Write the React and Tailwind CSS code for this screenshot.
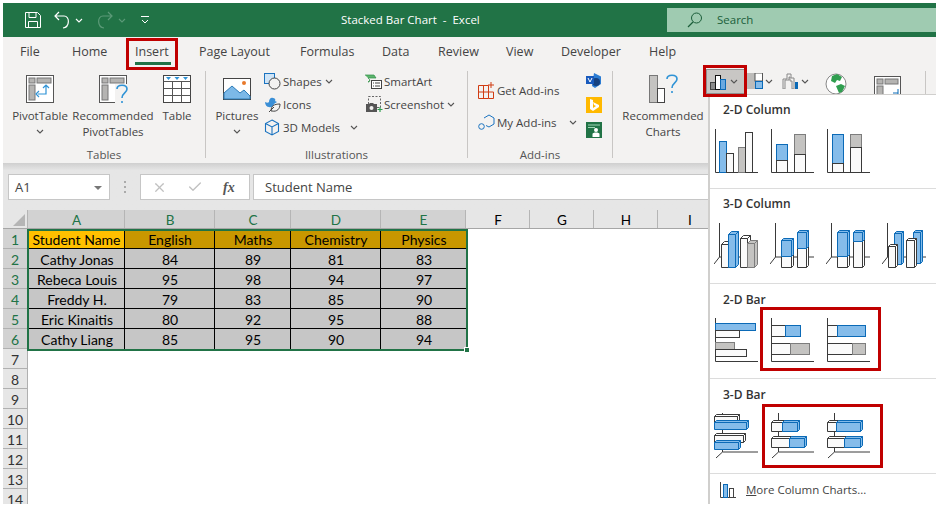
import { X, Check } from 'lucide-react';

const W = { fill: '#fafafa', stroke: '#3a3a3a' };
const B = { fill: '#85bcea', stroke: '#0b6ab7' };
const G = { fill: '#c4c3c1', stroke: '#7d7d7d' };

const rows = [
  ['Cathy Jonas', 84, 89, 81, 83],
  ['Rebeca Louis', 95, 98, 94, 97],
  ['Freddy H.', 79, 83, 85, 90],
  ['Eric Kinaitis', 80, 92, 95, 88],
  ['Cathy Liang', 85, 95, 90, 94],
];

function Chevron({ className = '', color = '#555' }) {
  return (
    <svg width="8" height="5" viewBox="0 0 8 5" className={className}>
      <path d="M1 1l3 3 3-3" fill="none" stroke={color} strokeWidth="1.1" />
    </svg>
  );
}

function Bar({ x, y, w, h, c }) {
  return <rect x={x + 0.5} y={y + 0.5} width={w} height={h} fill={c.fill} stroke={c.stroke} />;
}

// front face plus top and right side, for the 3-D thumbnails
function Box({ x, y, w, h, c, d = 3 }) {
  const side = c === W ? '#fff' : c.fill;
  return (
    <g stroke={c.stroke} fill={c.fill} strokeLinejoin="round">
      <path d={`M${x} ${y}l${d} ${-d}h${w}l${-d} ${d}z`} fill={side} />
      <path d={`M${x + w} ${y}l${d} ${-d}v${h}l${-d} ${d}z`} fill={side} />
      <rect x={x} y={y} width={w} height={h} />
    </g>
  );
}

function Thumb({ children }) {
  return (
    <svg width="46" height="46" viewBox="0 0 46 46" className="block shrink-0">
      {children}
    </svg>
  );
}

const Axis2D = () => <path d="M1.5 0v43.5H44" fill="none" stroke="#3a3a3a" />;
const Axis3DCol = () => <path d="M5.5 0v34M0 41l5.5-7H44" fill="none" stroke="#3a3a3a" />;
const Axis3DBar = () => <path d="M8.5 0v39M2 45l6.5-6H44" fill="none" stroke="#3a3a3a" />;

function ColumnThumbs() {
  return (
    <>
      <Thumb>
        <Axis2D />
        <Bar x={5} y={12} w={7} h={31} c={B} />
        <Bar x={12} y={24} w={7} h={19} c={W} />
        <Bar x={24} y={18} w={7} h={25} c={G} />
        <Bar x={31} y={3} w={7} h={40} c={W} />
      </Thumb>
      <Thumb>
        <Axis2D />
        <Bar x={6} y={15} w={11} h={16} c={B} />
        <Bar x={6} y={31} w={11} h={12} c={W} />
        <Bar x={24} y={5} w={11} h={20} c={G} />
        <Bar x={24} y={25} w={11} h={18} c={W} />
      </Thumb>
      <Thumb>
        <Axis2D />
        <Bar x={6} y={5} w={11} h={29} c={B} />
        <Bar x={6} y={34} w={11} h={9} c={W} />
        <Bar x={24} y={5} w={11} h={13} c={G} />
        <Bar x={24} y={18} w={11} h={25} c={W} />
      </Thumb>
    </>
  );
}

function Column3DThumbs() {
  return (
    <>
      <Thumb>
        <Axis3DCol />
        <Box x={7.5} y={21.5} w={7} h={23} c={W} />
        <Box x={14.5} y={11.5} w={7} h={33} c={B} />
        <Box x={26.5} y={15.5} w={7} h={29} c={W} />
        <Box x={33.5} y={20.5} w={7} h={24} c={G} />
      </Thumb>
      <Thumb>
        <Axis3DCol />
        <Box x={11.5} y={33.5} w={10} h={11} c={W} d={2} />
        <Box x={11.5} y={17.5} w={10} h={16} c={B} d={2} />
        <Box x={27.5} y={25.5} w={9} h={19} c={W} d={2} />
        <Box x={27.5} y={9.5} w={9} h={16} c={B} d={2} />
      </Thumb>
      <Thumb>
        <Axis3DCol />
        <Box x={11.5} y={33.5} w={10} h={11} c={W} d={2} />
        <Box x={11.5} y={9.5} w={10} h={24} c={B} d={2} />
        <Box x={27.5} y={18.5} w={9} h={26} c={W} d={2} />
        <Box x={27.5} y={9.5} w={9} h={9} c={B} d={2} />
      </Thumb>
      <Thumb>
        <Axis3DCol />
        <Box x={12.5} y={10.5} w={7} h={31} c={B} d={2} />
        <Box x={6.5} y={23.5} w={7} h={21} c={W} d={2} />
        <Box x={31.5} y={9.5} w={7} h={31} c={B} d={2} />
        <Box x={24.5} y={17.5} w={8} h={27} c={W} d={2} />
      </Thumb>
    </>
  );
}

function BarThumbs() {
  return (
    <>
      <Thumb>
        <Axis2D />
        <Bar x={1} y={5} w={40} h={7} c={B} />
        <Bar x={1} y={12} w={24} h={7} c={W} />
        <Bar x={1} y={24} w={19} h={7} c={G} />
        <Bar x={1} y={31} w={31} h={7} c={W} />
      </Thumb>
      <Thumb>
        <Axis2D />
        <Bar x={1} y={7} w={14} h={11} c={W} />
        <Bar x={15} y={7} w={15} h={11} c={B} />
        <Bar x={1} y={25} w={19} h={11} c={W} />
        <Bar x={20} y={25} w={19} h={11} c={G} />
      </Thumb>
      <Thumb>
        <Axis2D />
        <Bar x={1} y={7} w={10} h={11} c={W} />
        <Bar x={11} y={7} w={28} h={11} c={B} />
        <Bar x={1} y={25} w={25} h={11} c={W} />
        <Bar x={26} y={25} w={13} h={11} c={G} />
      </Thumb>
    </>
  );
}

function Bar3DThumbs() {
  return (
    <>
      <Thumb>
        <Axis3DBar />
        <Box x={0.5} y={3.5} w={23} h={6} c={W} d={2} />
        <Box x={0.5} y={9.5} w={32} h={7} c={B} d={2} />
        <Box x={0.5} y={22.5} w={29} h={7} c={W} d={2} />
        <Box x={0.5} y={29.5} w={24} h={7} c={B} d={2} />
      </Thumb>
      <Thumb>
        <Axis3DBar />
        <Box x={1.5} y={9.5} w={11} h={9} c={W} d={2} />
        <Box x={12.5} y={9.5} w={15} h={9} c={B} d={2} />
        <Box x={1.5} y={25.5} w={18} h={9} c={W} d={2} />
        <Box x={19.5} y={25.5} w={15} h={9} c={B} d={2} />
      </Thumb>
      <Thumb>
        <Axis3DBar />
        <Box x={1.5} y={9.5} w={9} h={9} c={W} d={2} />
        <Box x={10.5} y={9.5} w={24} h={9} c={B} d={2} />
        <Box x={1.5} y={25.5} w={17} h={9} c={W} d={2} />
        <Box x={18.5} y={25.5} w={16} h={9} c={B} d={2} />
      </Thumb>
    </>
  );
}

function PivotIcon({ children }) {
  return (
    <svg width="30" height="30" viewBox="0 0 30 30" className="block">
      <rect x="1.5" y="1.5" width="27" height="27" fill="#fff" stroke="#555" />
      <rect x="4" y="4" width="6" height="5" fill="#b5b4b2" stroke="#777" />
      <rect x="12" y="4" width="14" height="5" fill="#b5b4b2" stroke="#777" />
      <rect x="4" y="11" width="6" height="15" fill="#b5b4b2" stroke="#777" />
      {children}
    </svg>
  );
}

const Question = ({ x, y }) => (
  <path
    transform={`translate(${x} ${y})`}
    d="M1 4c0-5 10-5 10 0 0 4-5 4-5 9M6 16v2"
    fill="none"
    stroke="#2f93d6"
    strokeWidth="1.6"
  />
);

function LargeButton({ label, className = '', chevron, icon }) {
  return (
    <div className={`flex flex-col items-center pt-[4px] ${className}`}>
      <div className="flex h-[30px] items-center justify-center">{icon}</div>
      <div className="mt-[4px] text-center leading-[15.5px] whitespace-pre-line">{label}</div>
      {chevron && <Chevron className="mt-[5px]" />}
    </div>
  );
}

function SmallItem({ icon, label, chevron }) {
  return (
    <div className="flex h-[23px] items-center">
      <div className="flex w-[19px] shrink-0 items-center">{icon}</div>
      <span>{label}</span>
      {chevron && <Chevron className={chevron} />}
    </div>
  );
}

function GroupLabel({ children }) {
  return <div className="h-[16px] pt-[1px] text-center text-[11.5px] leading-[14px] text-[#555]">{children}</div>;
}

const Separator = () => <div className="mt-[1px] h-[87px] w-px shrink-0 bg-[#c8c6c4]" />;

function Ribbon() {
  return (
    <div className="flex h-[93px] bg-[#f3f2f1] text-[11.5px] text-[#444]">
      <div className="flex w-[202px] shrink-0 flex-col">
        <div className="flex h-[77px] pl-[9px]">
          <LargeButton
            label="PivotTable"
            chevron
            className="w-[56px]"
            icon={
              <PivotIcon>
                <path d="M21 12v8h-8M14 17l-3 3 3 3M18 14l3-3 3 3" fill="none" stroke="#2f93d6" strokeWidth="1.2" />
              </PivotIcon>
            }
          />
          <LargeButton
            label={'Recommended\nPivotTables'}
            className="ml-[3px] w-[84px]"
            icon={
              <PivotIcon>
                <rect x="17" y="10" width="13" height="20" fill="#f3f2f1" />
                <Question x={18} y={11} />
              </PivotIcon>
            }
          />
          <LargeButton
            label="Table"
            className="ml-[5px] w-[34px]"
            icon={
              <svg width="30" height="30" viewBox="0 0 30 30">
                <rect x="1.5" y="1.5" width="27" height="27" fill="#fff" stroke="#444" />
                <path d="M1.5 7.5h27M1.5 14.5h27M1.5 21.5h27M10.5 7.5v21M19.5 7.5v21" stroke="#555" fill="none" />
                <path d="M4 3h5l-2.5 3zM12.5 3h5L15 6zM21 3h5l-2.5 3z" fill="#2f93d6" />
              </svg>
            }
          />
        </div>
        <GroupLabel>Tables</GroupLabel>
      </div>
      <Separator />
      <div className="flex w-[261px] shrink-0 flex-col">
        <div className="flex h-[77px]">
          <LargeButton
            label="Pictures"
            chevron
            className="ml-[10px] w-[42px]"
            icon={
              <svg width="30" height="24" viewBox="0 0 30 24">
                <rect x="1.5" y="1.5" width="27" height="21" fill="#fff" stroke="#444" />
                <path d="M2 22V16l8-7 8 7 4-3 6 6v3z" fill="#7cb9e8" stroke="#2d7cb8" />
                <circle cx="22" cy="6" r="2" fill="#e8792b" />
              </svg>
            }
          />
          <div className="ml-[6px] w-[101px] shrink-0">
            <SmallItem
              label="Shapes"
              chevron="ml-[3px]"
              icon={
                <svg width="17" height="17" viewBox="0 0 17 17">
                  <rect x="0.5" y="0.5" width="10" height="10" fill="#cfe4f6" stroke="#1a73c0" />
                  <circle cx="10.5" cy="10.5" r="5.5" fill="#f3f2f1" stroke="#444" />
                </svg>
              }
            />
            <SmallItem
              label="Icons"
              icon={
                <svg width="17" height="17" viewBox="0 0 17 17">
                  <path d="M1 6c2 1 3 1 4 0 0-3 2-5 4-4 2 0 3 2 2 3l2 1-3 2c0 2-3 4-5 3-2 0-4-2-4-5z" fill="#3a8fd6" />
                  <path d="M7 15c0-5 3-7 9-7 0 5-3 8-8 7zM5 16l5-5" fill="#f3f2f1" stroke="#444" />
                </svg>
              }
            />
            <SmallItem
              label="3D Models"
              chevron="ml-[10px]"
              icon={
                <svg width="16" height="17" viewBox="0 0 16 17">
                  <path d="M8 1l6.5 3.5v8L8 16l-6.5-3.5v-8zM1.5 4.5L8 8l6.5-3.5M8 8v8" fill="none" stroke="#1a73c0" strokeWidth="1.1" />
                </svg>
              }
            />
          </div>
          <div className="w-[90px] shrink-0">
            <SmallItem
              label="SmartArt"
              icon={
                <svg width="17" height="15" viewBox="0 0 17 15">
                  <path d="M0 1h9l2 3H3l2 2-2 2 1 0 1-2" fill="#5cb46d" stroke="#2f8f46" strokeWidth="0.7" />
                  <rect x="6.5" y="6.5" width="10" height="8" fill="#fff" stroke="#444" />
                  <path d="M8 9h1M10 9h5M8 12h1M10 12h5" stroke="#444" />
                </svg>
              }
            />
            <SmallItem
              label="Screenshot"
              chevron="ml-[3px]"
              icon={
                <svg width="18" height="17" viewBox="0 0 18 17">
                  <rect x="3.5" y="0.5" width="12" height="11" fill="none" stroke="#666" strokeDasharray="2 1.5" />
                  <path d="M1 8h3l1-1h3l1 1h3v8H1z" fill="#555" />
                  <circle cx="6.5" cy="12" r="2" fill="#f3f2f1" />
                  <path d="M15 11v5M12.5 13.5h5" stroke="#2f9e4f" strokeWidth="1.2" />
                </svg>
              }
            />
          </div>
        </div>
        <GroupLabel>Illustrations</GroupLabel>
      </div>
      <Separator />
      <div className="flex w-[144px] shrink-0 flex-col">
        <div className="flex h-[77px] pl-[10px]">
          <div className="w-[108px] shrink-0 pt-[9px]">
            <SmallItem
              label="Get Add-ins"
              icon={
                <svg width="17" height="17" viewBox="0 0 17 17">
                  <path d="M.5 3.5h10v13H.5zM.5 10h15v6.5h-5M5.5 3.5v13M13 0v6M10 3h6" fill="none" stroke="#d13c12" />
                </svg>
              }
            />
            <div className="mt-[9px]">
              <SmallItem
                label="My Add-ins"
                chevron="ml-[12px]"
                icon={
                  <svg width="17" height="17" viewBox="0 0 17 17">
                    <path d="M6 4l5-3 5 3v6l-5 3-3-1.5" fill="none" stroke="#1a73c0" />
                    <circle cx="3.5" cy="12.5" r="2.8" fill="none" stroke="#1a73c0" />
                  </svg>
                }
              />
            </div>
          </div>
          <div className="flex flex-col gap-[9px] pt-[3px]">
            <svg width="16" height="15" viewBox="0 0 16 15">
              <path d="M8 0l7 3.5V11l-6 4-3-2H6z" fill="#2b7cd3" />
              <circle cx="10" cy="9" r="4" fill="#16417f" />
              <rect x="0" y="3" width="8" height="8" fill="#185abd" />
              <path d="M2 5l2 4 2-4" fill="none" stroke="#fff" />
            </svg>
            <svg width="16" height="16" viewBox="0 0 16 16">
              <rect width="16" height="16" fill="#ffb900" />
              <path d="M4 2l3 1v8l3-2-2-1-1-3 6 3v2l-6 4-3-2z" fill="#fff" />
            </svg>
            <svg width="16" height="16" viewBox="0 0 16 16">
              <rect width="16" height="16" fill="#217346" />
              <path d="M2 3h12M2 5.5h7" stroke="#9fd5b4" />
              <circle cx="10" cy="8" r="2" fill="#fff" />
              <path d="M6.5 15v-3c0-2 7-2 7 0v3z" fill="#fff" />
            </svg>
          </div>
        </div>
        <GroupLabel>Add-ins</GroupLabel>
      </div>
      <Separator />
      <div className="flex min-w-0 flex-1 items-start">
        <LargeButton
          label={'Recommended\nCharts'}
          className="ml-[10px] w-[80px] shrink-0"
          icon={
            <svg width="30" height="30" viewBox="0 0 30 30">
              <rect x="1.5" y="1.5" width="8" height="27" fill="#c4c3c1" stroke="#777" />
              <rect x="9.5" y="14.5" width="7" height="14" fill="#fff" stroke="#444" />
              <Question x={18} y={1} />
            </svg>
          }
        />
        <div className="ml-[4px] flex h-[23px] w-[37px] shrink-0 items-center gap-[2px] bg-[#c8c6c4] pl-[3px] outline outline-1 outline-[#8f8f8f]">
          <svg width="18" height="18" viewBox="0 0 18 18">
            <rect x=".5" y="9.5" width="5" height="7" fill="#8a8a8a" stroke="#444" />
            <rect x="5.5" y="2.5" width="5" height="14" fill="#fff" stroke="#111" />
            <rect x="10.5" y="6.5" width="5" height="10" fill="#6aa9e0" stroke="#0b6ab7" />
          </svg>
          <Chevron />
        </div>
        <div className="ml-[3px] mt-[3px] flex shrink-0 items-center gap-[2px]">
          <svg width="16" height="16" viewBox="0 0 16 16">
            <rect width="8" height="16" fill="#bdbcba" />
            <rect x="8" width="7.5" height="8" fill="#fff" stroke="#555" />
            <rect x="8.5" y="8.5" width="7" height="7" fill="#85bcea" stroke="#0b6ab7" />
          </svg>
          <Chevron />
        </div>
        <div className="ml-[9px] mt-[3px] flex shrink-0 items-center gap-[1px]">
          <svg width="18" height="16" viewBox="0 0 18 16">
            <path d="M1 16V6h4V1h4v4h3v11h-2V8H8V4H7v3H3v9z" fill="#f3f2f1" stroke="#888" />
            <rect x="13" y="9" width="3" height="7" fill="#0b6ab7" />
          </svg>
          <Chevron />
        </div>
        <svg width="24" height="24" viewBox="0 0 24 24" className="ml-[15px] mt-[2px] shrink-0">
          <circle cx="12" cy="12" r="10" fill="#fff" stroke="#888" />
          <path d="M8 4l5-2 5 3-2 4-3-1-2 3-4-2zM12 14l5-2 4 2-3 6-3 1z" fill="#2f9e4f" />
        </svg>
        <svg width="30" height="24" viewBox="0 0 30 24" className="ml-[25px] mt-[5px] shrink-0">
          <rect x="1.5" y="1.5" width="26" height="26" fill="#fff" stroke="#555" />
          <rect x="4" y="4" width="6" height="5" fill="#b5b4b2" stroke="#777" />
          <rect x="12" y="4" width="13" height="5" fill="#b5b4b2" stroke="#777" />
          <rect x="4" y="11" width="6" height="13" fill="#b5b4b2" stroke="#777" />
          <path d="M20 18h5M25 14v8" stroke="#0b6ab7" fill="none" />
        </svg>
        <div className="ml-[22px] mt-[1px] h-[87px] w-px shrink-0 bg-[#c8c6c4]" />
      </div>
    </div>
  );
}

function RedBox({ className }) {
  return <div className={`pointer-events-none absolute border-[3px] border-[#c00000] ${className}`} />;
}

function MenuSection({ title, height, headClass, gapClass, thumbs }) {
  return (
    <div className={`border-b border-[#dcdcdc] ${height}`}>
      <div className={`pl-[13px] text-[12px] leading-[16px] font-semibold text-[#333] ${headClass}`}>{title}</div>
      <div className={`flex gap-[10px] pl-[4px] ${gapClass}`}>{thumbs}</div>
    </div>
  );
}

function ChartMenu() {
  return (
    <div className="absolute left-[708px] top-[94px] h-[410px] w-[228px] border-t border-l-2 border-[#d0cfcd] bg-white">
      <MenuSection title="2-D Column" height="h-[94px]" headClass="pt-[7px]" gapClass="mt-[11px]" thumbs={<ColumnThumbs />} />
      <MenuSection title="3-D Column" height="h-[95px]" headClass="pt-[7px]" gapClass="mt-[11px]" thumbs={<Column3DThumbs />} />
      <MenuSection title="2-D Bar" height="h-[95px]" headClass="pt-[8px]" gapClass="mt-[10px]" thumbs={<BarThumbs />} />
      <MenuSection title="3-D Bar" height="h-[95px]" headClass="pt-[8px]" gapClass="mt-[10px]" thumbs={<Bar3DThumbs />} />
      <div className="flex items-center pl-[10px] pt-[7px] text-[11.5px] text-[#444]">
        <svg width="16" height="16" viewBox="0 0 16 16" className="mr-[10px]">
          <path d="M.5 0v15.5H16" fill="none" stroke="#444" />
          <rect x="3.5" y="2.5" width="4" height="13" fill="#85bcea" stroke="#0b6ab7" />
          <rect x="9.5" y="6.5" width="4" height="9" fill="#fff" stroke="#444" />
        </svg>
        <span>
          <span className="underline">M</span>ore Column Charts...
        </span>
      </div>
    </div>
  );
}

const colWidths = ['w-[97px]', 'w-[90px]', 'w-[76px]', 'w-[90px]', 'w-[85px]'];
const otherCols = ['F', 'G', 'H', 'I'];

function Sheet() {
  return (
    <div className="h-[294px] overflow-hidden bg-white font-['Lato',sans-serif] text-[14px] text-black">
      <div className="flex h-[19px] border-b border-[#a6a6a6] bg-[#e6e6e6] text-[13.5px] leading-[20px]">
        <div className="flex w-[25px] shrink-0 items-end justify-end border-r border-[#b5b5b5] p-[2px]">
          <div className="h-0 w-0 border-b-[12px] border-l-[12px] border-b-[#b5b5b5] border-l-transparent" />
        </div>
        {['A', 'B', 'C', 'D', 'E'].map((c, i) => (
          <div key={c} className={`${colWidths[i]} shrink-0 border-r border-[#b5b5b5] bg-[#d2d2d2] pl-[1px] text-center text-[#217346]`}>
            {c}
          </div>
        ))}
        {otherCols.map((c) => (
          <div key={c} className="w-[64px] shrink-0 border-r border-[#b5b5b5] pl-[1px] text-center">
            {c}
          </div>
        ))}
      </div>
      <div className="flex">
        <div className="w-[25px] shrink-0 text-[14px]">
          {Array.from({ length: 14 }, (_, i) => (
            <div
              key={i}
              className={`h-[20px] border-r border-b border-[#b0b0b0] text-center leading-[21px] ${
                i < 6 ? 'bg-[#d2d2d2] text-[#217346]' : 'bg-[#e6e6e6] text-[#333]'
              }`}
            >
              {i + 1}
            </div>
          ))}
        </div>
        <div className="pl-[1px] pt-[2px]">
          <div className="flex h-[18px] border-b border-black leading-[18px]">
            <div className="w-[96px] border-r border-black bg-[#ffc000] text-center">Student Name</div>
            {['English', 'Maths', 'Chemistry', 'Physics'].map((h, i) => (
              <div
                key={h}
                className={`${colWidths[i + 1]} bg-[#c99700] pl-[1px] text-center ${i < 3 ? 'border-r border-black' : ''}`}
              >
                {h}
              </div>
            ))}
          </div>
          {rows.map((r, ri) => (
            <div key={r[0]} className={`flex h-[20px] bg-[#c6c6c6] leading-[21px] ${ri < 4 ? 'border-b border-black' : ''}`}>
              {r.map((v, i) => (
                <div
                  key={i}
                  className={`${i === 0 ? 'w-[96px]' : colWidths[i]} pl-[1px] text-center ${i < 4 ? 'border-r border-black' : ''}`}
                >
                  {v}
                </div>
              ))}
            </div>
          ))}
        </div>
      </div>
    </div>
  );
}

export default function App() {
  return (
    <div className="relative h-[518px] w-[936px] overflow-hidden bg-white pl-[3px] pt-[3px] font-['Open_Sans',sans-serif]">
      <div className="flex h-[34px] items-center bg-[#217346] text-[11.5px] text-white">
        <svg width="18" height="18" viewBox="0 0 18 18" className="ml-[21px]">
          <path d="M1.5 1.5h12l3 3v12h-15z M5 1.5v5h7v-5 M4.5 16.5v-6h9v6" fill="none" stroke="#fff" />
        </svg>
        <svg width="17" height="18" viewBox="0 0 17 18" className="ml-[12px]">
          <path d="M5 1L1 5l4 4M1 5h9c6 0 6 11-1 12" fill="none" stroke="#fff" strokeWidth="1.2" />
        </svg>
        <Chevron color="#fff" className="ml-[4px]" />
        <svg width="17" height="18" viewBox="0 0 17 18" className="ml-[13px]">
          <path d="M12 1l4 4-4 4M16 5H7c-6 0-6 11 1 12" fill="none" stroke="#5c9a78" strokeWidth="1.2" />
        </svg>
        <Chevron color="#5c9a78" className="ml-[5px]" />
        <svg width="8" height="8" viewBox="0 0 8 8" className="ml-[15px]">
          <path d="M0 .5h8M1 4l3 3 3-3" fill="none" stroke="#fff" />
        </svg>
        <div className="ml-[192px] w-[140px] shrink-0 whitespace-pre">Stacked Bar Chart  -  Excel</div>
        <div className="ml-[186px] flex h-[24px] flex-1 items-center bg-[#9fcbb1] text-[#1b5e3a]">
          <svg width="16" height="16" viewBox="0 0 16 16" className="ml-[20px]">
            <circle cx="9.5" cy="6" r="5" fill="none" stroke="#1b5e3a" />
            <path d="M6 10l-5 5" stroke="#1b5e3a" strokeWidth="1.2" />
          </svg>
          <span className="ml-[14px]">Search</span>
        </div>
      </div>

      <div className="flex h-[33px] items-start bg-[#f3f2f1] pt-[6px] text-[12.5px] leading-[18px] text-[#444]">
        <span className="ml-[17px] w-[52px]">File</span>
        <span className="w-[63px]">Home</span>
        <span className="flex w-[64px] flex-col">Insert</span>
        <span className="w-[101px]">Page Layout</span>
        <span className="w-[82px]">Formulas</span>
        <span className="w-[56px]">Data</span>
        <span className="w-[68px]">Review</span>
        <span className="w-[55px]">View</span>
        <span className="w-[88px]">Developer</span>
        <span>Help</span>
      </div>

      <Ribbon />

      <div className="h-[47px] bg-[#e6e6e6] bg-gradient-to-b from-[#cfcfcf] from-0% to-[#e6e6e6] to-[16%] pt-[11px] text-[13px] text-[#444]">
        <div className="flex h-[26px]">
          <div className="ml-[5px] flex w-[102px] items-center justify-between border border-[#c6c6c6] bg-white pb-[0px] pl-[6px] pr-[7px] pt-[1px]">
            A1
            <div className="h-0 w-0 border-x-[4px] border-t-[4px] border-x-transparent border-t-[#777]" />
          </div>
          <div className="flex w-[30px] flex-col items-center justify-center gap-[3px]">
            <div className="h-[2px] w-[2px] bg-[#aaa]" />
            <div className="h-[2px] w-[2px] bg-[#aaa]" />
            <div className="h-[2px] w-[2px] bg-[#aaa]" />
          </div>
          <div className="flex w-[110px] items-center border border-[#c6c6c6] bg-white">
            <X size={15} className="ml-[11px] text-[#c0c0c0]" />
            <Check size={16} className="ml-[20px] text-[#c0c0c0]" />
            <span className="ml-[20px] font-['Liberation_Serif',serif] text-[14px] font-bold italic text-[#555]">fx</span>
          </div>
          <div className="ml-[3px] flex flex-1 items-center border border-[#c6c6c6] bg-white pl-[11px] pt-[1px]">Student Name</div>
        </div>
      </div>

      <Sheet />

      <div className="absolute left-[135px] top-[62px] h-[3px] w-[36px] bg-[#217346]" />
      <RedBox className="left-[126px] top-[38px] h-[32px] w-[52px]" />

      <div className="pointer-events-none absolute left-[27px] top-[229px] h-[122px] w-[441px] border-2 border-[#217346]" />
      <div className="absolute left-[464px] top-[347px] h-[6px] w-[6px] border border-white bg-[#217346]" />

      <ChartMenu />
      <RedBox className="left-[703px] top-[65px] h-[32px] w-[44px]" />
      <RedBox className="left-[760px] top-[307px] h-[64px] w-[121px]" />
      <RedBox className="left-[762px] top-[404px] h-[64px] w-[121px]" />
    </div>
  );
}
